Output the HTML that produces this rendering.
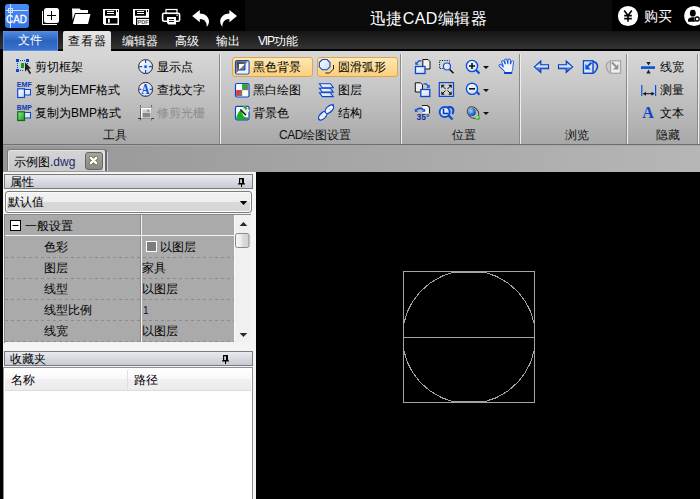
<!DOCTYPE html>
<html><head><meta charset="utf-8">
<style>
*{box-sizing:border-box;margin:0;padding:0}
html,body{width:700px;height:499px;overflow:hidden;background:#000;font-family:"Liberation Sans",sans-serif;}
.a{position:absolute}
.t{position:absolute;white-space:nowrap;line-height:1;}
svg{position:absolute;overflow:visible}
</style></head><body>
<!-- title bar -->
<div class="a" style="left:0;top:0;width:700px;height:31px;background:#000"></div>
<div class="a" style="left:245px;top:0;width:367px;height:31px;background:#0a0a0a"></div>
<!-- CAD logo -->
<div class="a" style="left:5px;top:4px;width:24px;height:24px;background:linear-gradient(#4a8cf6,#3474e6);border-radius:3px"></div>
<svg style="left:0;top:0" width="40" height="31">
<line x1="10.5" y1="4" x2="10.5" y2="28" stroke="#cfe0ff" stroke-width="1"/>
<line x1="6" y1="10.5" x2="28" y2="10.5" stroke="#cfe0ff" stroke-width="1"/>
<rect x="8.5" y="8.5" width="4" height="4" fill="none" stroke="#cfe0ff" stroke-width="1"/>
</svg>
<div class="t" style="left:6px;top:14px;font-size:11px;color:#fff;transform:scaleX(0.9);transform-origin:0 0;-webkit-text-stroke:0.3px #fff">CAD</div>
<svg style="left:0;top:0" width="245" height="31">
<!-- plus -->
<path d="M42.5 11 V24.5 H57" fill="none" stroke="#fff" stroke-width="1"/>
<rect x="44" y="8" width="15" height="15" rx="2.5" fill="#fff"/>
<path d="M47 15.5 H56 M51.5 11 V20" stroke="#000" stroke-width="1"/>
<!-- folder -->
<path d="M72 8.5 H79.5 L81 10 H88 V13 H75 L72.5 20 Z" fill="#fff"/>
<path d="M75.5 14 H90.5 L88 24 H72.8 Z" fill="#fff"/>
<!-- save -->
<path d="M103 9 H119 V25 H104.5 L103 23.5 Z" fill="#fff"/>
<rect x="105" y="10.2" width="11" height="5.6" fill="#000"/>
<path d="M107 11.5 H114 M107 13.5 H114" stroke="#fff" stroke-width="1"/>
<rect x="117" y="10" width="1" height="2" fill="#000"/>
<rect x="106" y="18" width="11.5" height="5.6" fill="#000"/>
<rect x="108" y="18.8" width="1.8" height="4" fill="#fff"/>
<!-- pdf save -->
<path d="M133 9 H149 V25 H134.5 L133 23.5 Z" fill="#fff"/>
<rect x="135" y="10.2" width="11" height="5.6" fill="#000"/>
<path d="M137 11.5 H144 M137 13.5 H144" stroke="#fff" stroke-width="1"/>
<rect x="147" y="10" width="1" height="2" fill="#000"/>
<rect x="136" y="17.8" width="13" height="1.2" fill="#000"/>
<rect x="136" y="17.8" width="1.2" height="7.2" fill="#000"/>
<text x="137.6" y="24.2" font-size="5.6" font-family="Liberation Sans" font-weight="bold" fill="#555">PDF</text>
<!-- printer -->
<rect x="166" y="9.5" width="11" height="4" fill="none" stroke="#fff" stroke-width="1.2"/>
<rect x="162.6" y="13.3" width="17" height="8" rx="1.5" fill="none" stroke="#fff" stroke-width="1.6"/>
<rect x="176.5" y="14.6" width="1.3" height="1.3" fill="#fff"/>
<path d="M167 17 H176 V24.6 H168.5 L167 23 Z" fill="#fff"/>
<path d="M169 19.5 H174 M169 21.5 H174" stroke="#000" stroke-width="0.9"/>
<!-- undo -->
<path d="M192.2 16 L199.8 10 V13.5 C205 13.5 209 17 209 21.5 C209 23.5 208 25.5 206.8 26.8 C206.8 22 204.5 19 199.8 19 V22.2 Z" fill="#fff"/>
<!-- redo -->
<path d="M237 16 L229.4 10 V13.5 C224.2 13.5 220.2 17 220.2 21.5 C220.2 23.5 221.2 25.5 222.4 26.8 C222.4 22 224.7 19 229.4 19 V22.2 Z" fill="#fff"/>
</svg>
<svg style="left:0;top:0" width="700" height="31">
<circle cx="628" cy="16" r="10.1" fill="#fff"/>
<path d="M624.2 10.6 L628 15.5 L631.8 10.6 M628 15.5 V21.8 M624.2 15.6 H631.8 M624.2 18.6 H631.8" fill="none" stroke="#000" stroke-width="1.6"/>
<circle cx="694.2" cy="16" r="10.1" fill="#fff"/>
<ellipse cx="692.8" cy="13.2" rx="2.9" ry="3.4" fill="#000"/>
<path d="M688 21.8 V20 C688 18 690 17.2 692.8 17.2 C695 17.2 696 17.6 696.5 18 V21.8 Z" fill="#000"/>
<circle cx="697.2" cy="19" r="2.9" fill="#fff"/>
<circle cx="697.2" cy="19" r="2" fill="none" stroke="#000" stroke-width="1.3"/>
</svg>
<div class="t" style="left:644px;top:9px;font-size:14px;color:#fff">购买</div>
<div class="t" style="left:370px;top:11px;font-size:16px;color:#fff;letter-spacing:0.4px">迅捷CAD编辑器</div>

<!-- menu bar -->
<div class="a" style="left:0;top:31px;width:700px;height:19px;background:linear-gradient(#141414,#363636)"></div>
<div class="a" style="left:0;top:49px;width:700px;height:2px;background:#000"></div>
<div class="a" style="left:3px;top:31px;width:55px;height:20px;background:linear-gradient(#4a88de,#2d62c0 50%,#3a72d0);border:1px solid #5a8ee0"></div>
<div class="t" style="left:18px;top:34px;font-size:12px;color:#fff">文件</div>
<div class="a" style="left:63px;top:31px;width:48px;height:20px;background:linear-gradient(#e6e6e6,#d4d4d4);border-radius:2px 2px 0 0"></div>
<div class="t" style="left:68px;top:35px;font-size:12px;color:#000;letter-spacing:0.8px">查看器</div>
<div class="t" style="left:122px;top:35px;font-size:12px;color:#fff">编辑器</div>
<div class="t" style="left:175px;top:35px;font-size:12px;color:#fff">高级</div>
<div class="t" style="left:216px;top:35px;font-size:12px;color:#fff">输出</div>
<div class="t" style="left:258px;top:35px;font-size:12px;color:#fff"><span style="letter-spacing:-1.2px">VIP</span>功能</div>

<!-- ribbon -->
<div class="a" style="left:3px;top:51px;width:697px;height:93px;background:linear-gradient(#d8d8d8,#c4c4c4 45%,#a8a8a8)"></div>
<!-- dividers -->
<div class="a" style="left:219px;top:54px;width:1px;height:90px;background:#8a8a8a"></div>
<div class="a" style="left:220px;top:54px;width:1px;height:90px;background:#eeeeee"></div>
<div class="a" style="left:400px;top:54px;width:1px;height:90px;background:#8a8a8a"></div>
<div class="a" style="left:401px;top:54px;width:1px;height:90px;background:#eeeeee"></div>
<div class="a" style="left:519px;top:54px;width:1px;height:90px;background:#8a8a8a"></div>
<div class="a" style="left:520px;top:54px;width:1px;height:90px;background:#eeeeee"></div>
<div class="a" style="left:626px;top:54px;width:1px;height:90px;background:#8a8a8a"></div>
<div class="a" style="left:627px;top:54px;width:1px;height:90px;background:#eeeeee"></div>
<div class="a" style="left:697px;top:54px;width:1px;height:90px;background:#8a8a8a"></div>
<div class="a" style="left:698px;top:54px;width:1px;height:90px;background:#eeeeee"></div>

<div class="t" style="left:35px;top:61px;font-size:12px;color:#000">剪切框架</div>
<div class="t" style="left:35px;top:84px;font-size:12px;color:#000">复制为EMF格式</div>
<div class="t" style="left:35px;top:107px;font-size:12px;color:#000">复制为BMP格式</div>
<div class="t" style="left:157px;top:61px;font-size:12px;color:#000">显示点</div>
<div class="t" style="left:157px;top:84px;font-size:12px;color:#000">查找文字</div>
<div class="t" style="left:157px;top:107px;font-size:12px;color:#8c8c8c">修剪光栅</div>
<div class="t" style="left:103px;top:129px;font-size:12px;color:#111">工具</div>

<div class="a" style="left:232px;top:57px;width:81px;height:20px;border:1px solid #dea64c;border-radius:3px;background:linear-gradient(#fee8b4,#fbd07c)"></div>
<div class="a" style="left:317px;top:57px;width:81px;height:20px;border:1px solid #dea64c;border-radius:3px;background:linear-gradient(#fee8b4,#fbd07c)"></div>
<div class="t" style="left:253px;top:61px;font-size:12px;color:#000">黑色背景</div>
<div class="t" style="left:338px;top:61px;font-size:12px;color:#000">圆滑弧形</div>
<div class="t" style="left:253px;top:84px;font-size:12px;color:#000">黑白绘图</div>
<div class="t" style="left:253px;top:107px;font-size:12px;color:#000">背景色</div>
<div class="t" style="left:338px;top:84px;font-size:12px;color:#000">图层</div>
<div class="t" style="left:338px;top:107px;font-size:12px;color:#000">结构</div>
<div class="t" style="left:279px;top:129px;font-size:12px;color:#111"><span style="letter-spacing:-0.4px">CAD</span>绘图设置</div>

<div class="t" style="left:452px;top:129px;font-size:12px;color:#111">位置</div>
<div class="t" style="left:565px;top:129px;font-size:12px;color:#111">浏览</div>
<div class="t" style="left:660px;top:61px;font-size:12px;color:#000">线宽</div>
<div class="t" style="left:660px;top:84px;font-size:12px;color:#000">测量</div>
<div class="t" style="left:660px;top:107px;font-size:12px;color:#000">文本</div>
<div class="t" style="left:656px;top:129px;font-size:12px;color:#111">隐藏</div>

<!-- ribbon icons -->
<svg style="left:0;top:0" width="700" height="145">
<defs>
<linearGradient id="lb" x1="0" y1="0" x2="1" y2="1"><stop offset="0" stop-color="#ffffff"/><stop offset="1" stop-color="#c8d8f8"/></linearGradient>
<linearGradient id="gr" x1="0" y1="0" x2="1" y2="1"><stop offset="0" stop-color="#9ee89e"/><stop offset="1" stop-color="#1a9a1a"/></linearGradient>
<linearGradient id="dk" x1="0" y1="0" x2="1" y2="1"><stop offset="0" stop-color="#3a3a3a"/><stop offset="1" stop-color="#9a9a9a"/></linearGradient>
<radialGradient id="sph" cx="0.35" cy="0.35" r="0.7"><stop offset="0" stop-color="#a8d0ff"/><stop offset="1" stop-color="#0040b0"/></radialGradient>
<radialGradient id="gsph" cx="0.35" cy="0.35" r="0.7"><stop offset="0" stop-color="#b0ffb0"/><stop offset="1" stop-color="#10a010"/></radialGradient>
<linearGradient id="arr" x1="0" y1="0" x2="0" y2="1"><stop offset="0" stop-color="#3a7ae8"/><stop offset="0.45" stop-color="#e8f0ff"/><stop offset="0.6" stop-color="#5a90f0"/><stop offset="1" stop-color="#1a50c8"/></linearGradient>
</defs>
<!-- 剪切框架 -->
<g fill="#0a46d0">
<rect x="16" y="59" width="3" height="3"/><rect x="26" y="59" width="3" height="3"/><rect x="16" y="69" width="3" height="3"/>
<rect x="20" y="60" width="1" height="1"/><rect x="22" y="60" width="1" height="1"/><rect x="24" y="60" width="1" height="1"/>
<rect x="17" y="63" width="1" height="1"/><rect x="17" y="65" width="1" height="1"/><rect x="17" y="67" width="1" height="1"/>
<rect x="20" y="70" width="1" height="1"/><rect x="22" y="70" width="1" height="1"/><rect x="27" y="63" width="1" height="1"/>
</g>
<rect x="21" y="63" width="3" height="5" fill="#10a010"/>
<path d="M25 62.3 L31 68.5 L28.5 68.8 L31.2 73.2 L29.6 74 L27 69.5 L25 71.8 Z" fill="#202020"/>
<!-- EMF -->
<text x="16.8" y="87" font-size="7" font-weight="bold" font-family="Liberation Sans" fill="#0a3ab8" textLength="15" lengthAdjust="spacingAndGlyphs">EMF</text>
<rect x="22.5" y="89.5" width="8" height="5.5" fill="url(#lb)" stroke="#0a46d0" stroke-width="1"/>
<rect x="17.7" y="88.8" width="6.8" height="8.7" fill="url(#lb)" stroke="#0a46d0" stroke-width="1.2"/>
<!-- BMP -->
<text x="16.8" y="110" font-size="7" font-weight="bold" font-family="Liberation Sans" fill="#0a3ab8" textLength="15" lengthAdjust="spacingAndGlyphs">BMP</text>
<rect x="22.5" y="112.5" width="8" height="5.5" fill="url(#lb)" stroke="#0a46d0" stroke-width="1"/>
<rect x="17.7" y="111.8" width="6.8" height="8.7" fill="url(#gr)" stroke="#106a10" stroke-width="1.2"/>
<!-- 显示点 -->
<circle cx="145.6" cy="66.6" r="7" fill="url(#lb)" stroke="#2a2a2a" stroke-width="1"/>
<path d="M145.6 60 V63 M145.6 70 V73 M139.2 66.6 H142.2 M149 66.6 H152" stroke="#0a50d8" stroke-width="1.2"/>
<rect x="144.3" y="65.4" width="2.5" height="2.5" fill="#0a50d8"/>
<!-- 查找文字 -->
<circle cx="145.6" cy="89.4" r="7" fill="url(#lb)" stroke="#2a2a2a" stroke-width="1"/>
<path d="M139.2 89.4 H141.5 M149.7 89.4 H152 M145.6 95.5 V96" stroke="#0a50d8" stroke-width="1.2"/>
<text x="0" y="0" font-size="14.5" font-weight="bold" font-family="Liberation Serif" fill="#0a50d8" transform="translate(141.3 93.6) scale(0.78 1)">A</text>
<!-- 修剪光栅 -->
<path d="M140.5 105 V120.5 M151.5 105 V120.5" stroke="#666" stroke-width="1"/>
<path d="M138 107.5 H154" stroke="#aaa" stroke-width="1"/>
<path d="M138 118.5 H154" stroke="#333" stroke-width="1"/>
<rect x="141.5" y="108.5" width="9.5" height="9.5" fill="#f4f4f4" stroke="#fff"/>
<rect x="142.5" y="113" width="8" height="4.5" fill="#888"/>
<rect x="142.5" y="109.5" width="8" height="3.5" fill="#ccc"/>
<circle cx="148.2" cy="110.8" r="1.3" fill="#999"/>
<!-- 黑色背景 -->
<rect x="235.5" y="60.5" width="13.5" height="13.5" rx="1.5" fill="#fff" stroke="#0a46c8" stroke-width="1.2"/>
<path d="M236.3 61.3 H248.2 L236.3 73.2 Z" fill="url(#dk)"/>
<path d="M248.2 61.3 V73.2 H236.3 Z" fill="#eef2ff"/>
<rect x="239" y="64" width="6" height="6" fill="#fff"/>
<path d="M245 64 V70 H239 Z" fill="#777"/>
<path d="M239 70 H245 V64" fill="none" stroke="#0a46c8" stroke-width="1"/>
<!-- 黑白绘图 -->
<rect x="235.5" y="83.5" width="13.5" height="13.5" rx="1.5" fill="#fff" stroke="#0a46c8" stroke-width="1.2"/>
<path d="M242.2 84.3 H248.2 V90.2 H242.2 Z" fill="#777"/>
<path d="M242.2 84.3 H248.2 L242.2 90.2 Z" fill="#18b818"/>
<path d="M236.3 90.2 H242.2 V96.2 H236.3 Z" fill="#777"/>
<path d="M236.3 90.2 H242.2 L236.3 96.2 Z" fill="#f03030"/>
<!-- 背景色 -->
<rect x="235.5" y="106.3" width="13.5" height="13.5" rx="1.5" fill="#fff" stroke="#0a46c8" stroke-width="1.2"/>
<path d="M236.3 119.2 V117 C237.5 115 238.5 111 240.5 110.5 C242 111.5 242.5 115 244 116.5 C245.5 117.5 247 117.5 248.2 117.3 V119.2 Z" fill="#18b018"/>
<path d="M240.5 109.5 L244.5 105.5 L249.8 110.8 L245.8 114.8 Z" fill="#e8e8e8"/>
<path d="M243 107 L244.5 105.5 L247.5 108.5 L246 110 Z" fill="#18b018"/>
<path d="M240.3 109.5 L246 115.2" stroke="#111" stroke-width="1.6"/>
<!-- 圆滑弧形 -->
<path d="M322.3 59.5 H327 L330 62.5 V66.8 L327 69.8 H322.3 L319.3 66.8 V62.5 Z" fill="url(#lb)" stroke="#0a46d0" stroke-width="1.1"/>
<path d="M333.5 65 V69 L329.5 73 H325.3" fill="none" stroke="#222" stroke-width="1"/>
<!-- 图层 -->
<path d="M319.5 92.8 H330.5 L333.3 96.6 H322.3 Z" fill="url(#lb)" stroke="#0a46d0" stroke-width="1.1"/>
<path d="M319.5 88.3 H330.5 L333.3 92.1 H322.3 Z" fill="url(#lb)" stroke="#0a46d0" stroke-width="1.1"/>
<path d="M319.5 83.8 H330.5 L333.3 87.8 H322.3 Z" fill="url(#lb)" stroke="#0a46d0" stroke-width="1.1"/>
<!-- 结构 -->
<ellipse cx="322.8" cy="115.8" rx="5.2" ry="2.9" transform="rotate(-45 322.8 115.8)" fill="#f4f4ff" stroke="#0a46d0" stroke-width="1.3"/>
<ellipse cx="329.4" cy="109.2" rx="5.2" ry="2.9" transform="rotate(-45 329.4 109.2)" fill="#f4f4ff" stroke="#0a46d0" stroke-width="1.3"/>
<path d="M321 114 L324.5 117.5 M327.6 107.4 L331.2 111" stroke="#c8b890" stroke-width="1" stroke-dasharray="1 1"/>
<path d="M332.6 105 L333.5 104.2 M318.6 119.9 L319.8 119.2" stroke="#0a46d0" stroke-width="1.3"/>
<!-- 位置 col1 -->
<path d="M422.8 59.5 H428 L430 61.5 V69 H422.8 Z" fill="#f0f0f0" stroke="#111" stroke-width="1"/>
<rect x="415.5" y="66.5" width="9.5" height="7" fill="url(#lb)" stroke="#0a46d0" stroke-width="1.3"/>
<path d="M421.5 60.8 H419 L416.5 63.3" fill="none" stroke="#0a50d8" stroke-width="1.3"/><path d="M415.3 61.5 V64.8 H418.6 Z" fill="#0a50d8"/>
<path d="M415.3 82.8 H420.5 L422.5 84.8 V92 H415.3 Z" fill="#f0f0f0" stroke="#111" stroke-width="1"/>
<rect x="420.8" y="89.5" width="9" height="7" fill="url(#lb)" stroke="#0a46d0" stroke-width="1.3"/>
<path d="M423.5 83.8 H426 L428.5 86.3" fill="none" stroke="#0a50d8" stroke-width="1.3"/><path d="M429.7 84.5 V87.8 H426.4 Z" fill="#0a50d8"/>
<path d="M422.5 105.5 H427.5 L429.5 107.5 V113.5 H422.5 Z" fill="#f4f4f4"/>
<path d="M422.5 106 V105.5 H427.5 L429.5 107.5 V113.5" fill="none" stroke="#222" stroke-width="1.1"/>
<path d="M416.5 109.8 C418 108 422 108 423.5 109.8" fill="none" stroke="#0a50d8" stroke-width="1.8"/>
<path d="M414.8 108.5 V111.8 H418.2 Z M425.2 108.5 V111.8 H421.8 Z" fill="#0a50d8"/>
<text x="416.5" y="120.2" font-size="8.6" font-weight="bold" font-family="Liberation Sans" fill="#0a2aa8" textLength="12.8" lengthAdjust="spacingAndGlyphs">35°</text>
<!-- 位置 col2 -->
<rect x="439.5" y="60.5" width="10" height="8" fill="none" stroke="#222" stroke-width="1" stroke-dasharray="1.2 1.2"/>
<path d="M449.3 69 L453.5 73.2" stroke="#111" stroke-width="1.6"/>
<circle cx="447" cy="66.5" r="3.5" fill="url(#lb)" stroke="#0a50d8" stroke-width="1.2"/>
<rect x="439.3" y="82.6" width="14.2" height="13.8" fill="#d0d0d0" stroke="#0a46d0" stroke-width="1.2"/>
<path d="M442 85.5 L445.5 89 M451 85.5 L447.5 89 M442 94 L445.5 90.5 M451 94 L447.5 90.5" stroke="#111" stroke-width="1"/>
<path d="M441.3 84.8 H444.8 L441.3 88.3 Z M451.7 84.8 H448.2 L451.7 88.3 Z M441.3 94.7 H444.8 L441.3 91.2 Z M451.7 94.7 H448.2 L451.7 91.2 Z" fill="#111"/>
<path d="M448.5 115.5 L452.5 119.5" stroke="#0a50d8" stroke-width="2.4"/>
<path d="M446.5 107.8 C451.5 105.8 455 108.5 452.5 114" fill="none" stroke="#0a46d0" stroke-width="2"/>
<circle cx="444.7" cy="112" r="5" fill="url(#lb)" stroke="#0a50d8" stroke-width="2"/>
<path d="M443.5 108.5 V113.5 H448.5" fill="none" stroke="#0a3ab8" stroke-width="1.6"/>
<!-- 位置 col3 -->
<path d="M476 70 L479.5 73.5" stroke="#0a50d8" stroke-width="2.2"/>
<circle cx="472" cy="66" r="5.6" fill="url(#lb)" stroke="#0a50d8" stroke-width="1.4"/>
<path d="M469 66 H475 M472 63 V69" stroke="#111" stroke-width="1.6"/>
<path d="M483 66 H489 L486 69 Z" fill="#111"/>
<path d="M476 91 L479.5 94.8" stroke="#0a50d8" stroke-width="2.2"/>
<circle cx="472" cy="88.8" r="5.6" fill="url(#lb)" stroke="#0a50d8" stroke-width="1.4"/>
<path d="M469 88.8 H475" stroke="#111" stroke-width="1.6"/>
<path d="M483 89 H489 L486 92 Z" fill="#111"/>
<ellipse cx="473" cy="112.6" rx="6.5" ry="5" transform="rotate(45 473 112.6)" fill="none" stroke="#444" stroke-width="1"/>
<circle cx="471.8" cy="112" r="4" fill="url(#sph)"/>
<circle cx="477.6" cy="117.8" r="2.3" fill="url(#gsph)"/>
<path d="M483 112 H489 L486 115 Z" fill="#111"/>
<!-- hand -->
<g stroke-linecap="round">
<path d="M500.2 65.5 L504.5 69.5 M502.8 61.8 L504.5 65.5 M505.8 60.2 L506.8 64.5 M509.2 60.2 L509.2 64.5 M512.4 62 L511.8 65" stroke="#1a56d8" stroke-width="3.2"/>
<path d="M503.5 64 H512.8 V68 C512.8 70 512 71 511.8 71.5 V73.5 H504.5 V71.5 L503.2 69.5 Z" fill="#f4f8ff" stroke="#1a56d8" stroke-width="1" stroke-linejoin="round"/>
<path d="M500.2 65.5 L504.5 69.5 M502.8 61.8 L504.5 65.5 M505.8 60.2 L506.8 64.5 M509.2 60.2 L509.2 64.5 M512.4 62 L511.8 65" stroke="#f8faff" stroke-width="1.4"/>
<path d="M504.2 64.6 H512.2 V68 C512.2 69.5 511.5 70.5 511.2 71 V72 H505 V71 L503.8 69.3 Z" fill="#eef3ff"/>
<rect x="504.5" y="72" width="7.3" height="2" fill="#0a40c0"/>
</g>
<!-- 浏览 -->
<path d="M534.3 66.8 L540.8 61 V64.8 H548.5 V68.7 H540.8 V72.6 Z" fill="url(#arr)" stroke="#0a3ab0" stroke-width="1.1"/>
<path d="M572.7 66.8 L566.2 61 V64.8 H558.5 V68.7 H566.2 V72.6 Z" fill="url(#arr)" stroke="#0a3ab0" stroke-width="1.1"/>
<path d="M590 61.5 C595 61 598 63.5 597.5 67 C597.2 69.5 595.5 71.5 594 73" fill="none" stroke="#0a46c8" stroke-width="1.6"/>
<rect x="583.5" y="60.8" width="9.5" height="12.5" fill="url(#lb)" stroke="#0a46c8" stroke-width="1.4"/>
<path d="M584.5 61.8 H592 V67 H584.5 Z" fill="#cfe0ff"/>
<path d="M591.5 62.5 L587.5 66.5" stroke="#0a50d8" stroke-width="2"/>
<path d="M585.3 64 V69.5 H590.8 Z" fill="#0a50d8"/>
<path d="M612.5 61.5 C608 61 606 63.5 606.3 67 C606.5 69.5 608 71.5 609.5 73" fill="none" stroke="#a8a8a8" stroke-width="1.6"/>
<rect x="610.5" y="60.8" width="10" height="12.5" fill="#f0f0f0" stroke="#a8a8a8" stroke-width="1.4"/>
<path d="M612 62.5 L616 66.5" stroke="#909090" stroke-width="2"/>
<path d="M618.3 64 V69.5 H612.8 Z" fill="#909090"/>
<!-- 隐藏 -->
<rect x="641" y="66.3" width="14" height="2.6" fill="#0a50d8"/>
<path d="M646.3 62 H650.7 L648.5 65.6 Z M646.3 73.4 H650.7 L648.5 69.6 Z" fill="#222"/>
<path d="M641.8 85 V96 M655.6 85 V96" stroke="#0a50d8" stroke-width="1.2"/>
<path d="M643.5 93.7 H654" stroke="#111" stroke-width="1"/>
<path d="M643 93.7 L646 91.7 V95.7 Z M654.5 93.7 L651.5 91.7 V95.7 Z" fill="#111"/>
<text x="0" y="0" font-size="16.5" font-weight="bold" font-family="Liberation Serif" fill="#0a46c8" transform="translate(642.3 118.4) scale(0.97 1)">A</text>
</svg>
<!-- tab strip -->
<div class="a" style="left:3px;top:144px;width:697px;height:1px;background:#6e6e6e"></div>
<div class="a" style="left:3px;top:145px;width:697px;height:27px;background:linear-gradient(90deg,#969696,#b6b6b6)"></div>
<div class="a" style="left:3px;top:145px;width:697px;height:1px;background:#a8a8a8"></div>
<div class="a" style="left:7px;top:149px;width:100px;height:22px;background:#7a7a7a;border-radius:3px 3px 0 0"></div>
<div class="a" style="left:8px;top:150px;width:97px;height:21px;background:#e4e4e4;border-radius:2px 2px 0 0"></div>
<div class="a" style="left:9px;top:151px;width:94px;height:20px;background:linear-gradient(#d4d4d4,#c8c8c8)"></div>
<div class="a" style="left:105px;top:151px;width:2px;height:20px;background:#686868"></div>
<div class="a" style="left:107px;top:152px;width:1px;height:19px;background:#cfcfcf"></div>
<div class="t" style="left:14px;top:156px;font-size:12px;color:#000">示例图<span style="color:#1a2a6a">.dwg</span></div>
<div class="a" style="left:85px;top:152px;width:18px;height:18px;background:linear-gradient(#a4a4a4,#8a8a8a);border:1px solid #666;border-radius:3px"></div>
<svg style="left:0;top:0" width="120" height="175">
<path d="M90.8 157.8 L96.2 163.2 M96.2 157.8 L90.8 163.2" stroke="#7a6a2a" stroke-width="4" stroke-linecap="round"/>
<path d="M90.8 157.8 L96.2 163.2 M96.2 157.8 L90.8 163.2" stroke="#fff" stroke-width="2.4" stroke-linecap="round"/>
</svg>

<!-- canvas -->
<div class="a" style="left:256px;top:172px;width:444px;height:327px;background:#000"></div>

<!-- left panel -->
<div class="a" style="left:3px;top:172px;width:253px;height:327px;background:#f4f4f4"></div>


<div class="a" style="left:4px;top:174px;width:249px;height:15px;border:1px solid #7a7a7a;background:linear-gradient(#e8eaee,#c6cad2)"></div>
<div class="t" style="left:10px;top:176px;font-size:12px;color:#000">属性</div>
<svg style="left:0;top:0" width="260" height="215">
<rect x="239" y="178" width="5" height="6" fill="#000"/><rect x="240.3" y="179.3" width="1.5" height="3.8" fill="#fff"/><rect x="238" y="183.3" width="7" height="1.2" fill="#000"/><rect x="241" y="184" width="1.1" height="3" fill="#000"/>
<path d="M239.8 201 H247.3 L243.55 205 Z" fill="#000"/>
</svg>
<div class="a" style="left:5px;top:191px;width:247px;height:22px;border:1px solid #7c7c7c;border-radius:3px;background:linear-gradient(#f2f2f2 0,#eeeeee 50%,#d8d8d8 50%,#d6d6d6 100%);box-shadow:inset 0 0 0 1px #fafafa"></div>
<svg style="left:0;top:0" width="260" height="215">
<path d="M239.8 201 H247.3 L243.55 205 Z" fill="#000"/>
</svg>
<div class="t" style="left:8px;top:196px;font-size:12px;color:#000">默认值</div>
<!-- grid -->
<div class="a" style="left:4px;top:214px;width:247px;height:1px;background:#8a8a8a"></div>
<div class="a" style="left:4px;top:214px;width:1px;height:129px;background:#8a8a8a"></div>
<div class="a" style="left:5px;top:215px;width:229px;height:127px;background:#aaaaaa"></div>
<div class="a" style="left:234px;top:215px;width:17px;height:127px;background:#f0f0f0"></div>
<div class="a" style="left:234px;top:215px;width:1px;height:127px;background:#fafafa"></div>
<div class="a" style="left:140px;top:215px;width:1px;height:127px;background:#8a8a8a"></div>
<div class="a" style="left:141px;top:215px;width:1px;height:127px;background:#f4f4f4"></div>
<div class="a" style="left:5px;top:235px;width:229px;height:1px;background:#f4f4f4"></div>
<svg style="left:0;top:0" width="260" height="345">
<path d="M5 257.5 H234 M5 278.5 H234 M5 299.5 H234 M5 320.5 H234 M5 341.5 H234" stroke="#8c8c8c" stroke-width="1" stroke-dasharray="3 3"/>
<rect x="10.5" y="220.5" width="10" height="10" fill="#fff" stroke="#000" stroke-width="1"/>
<path d="M12.5 225.5 H18.5" stroke="#000" stroke-width="1"/>
<rect x="146" y="241" width="11" height="11" fill="#fff"/>
<rect x="147" y="242" width="9" height="9" fill="#7c7c7c"/>
<path d="M239.6 226 H247.3 L243.45 222 Z" fill="#2a2a2a"/>
<path d="M239.6 333 H247.3 L243.45 337 Z" fill="#2a2a2a"/>
<rect x="235.5" y="233.5" width="13.5" height="14" rx="2" fill="url(#thumb)" stroke="#8a8a8a" stroke-width="1"/>
<defs><linearGradient id="thumb" x1="0" y1="0" x2="1" y2="0"><stop offset="0" stop-color="#f6f6f6"/><stop offset="0.5" stop-color="#eaeaea"/><stop offset="0.5" stop-color="#dcdcdc"/><stop offset="1" stop-color="#d0d0d0"/></linearGradient></defs>
</svg>
<div class="t" style="left:25px;top:220px;font-size:12px;color:#000">一般设置</div>
<div class="t" style="left:44px;top:241px;font-size:12px;color:#000">色彩</div>
<div class="t" style="left:44px;top:262px;font-size:12px;color:#000">图层</div>
<div class="t" style="left:44px;top:283px;font-size:12px;color:#000">线型</div>
<div class="t" style="left:44px;top:304px;font-size:12px;color:#000">线型比例</div>
<div class="t" style="left:44px;top:325px;font-size:12px;color:#000">线宽</div>
<div class="t" style="left:160px;top:241px;font-size:12px;color:#000">以图层</div>
<div class="t" style="left:142px;top:262px;font-size:12px;color:#000">家具</div>
<div class="t" style="left:142px;top:283px;font-size:12px;color:#000">以图层</div>
<div class="t" style="left:143px;top:306px;font-size:10px;color:#0a0a40">1</div>
<div class="t" style="left:142px;top:325px;font-size:12px;color:#000">以图层</div>

<!-- favorites -->
<div class="a" style="left:4px;top:351px;width:249px;height:15px;border:1px solid #7a7a7a;background:linear-gradient(#e8eaee,#c6cad2)"></div>
<div class="t" style="left:10px;top:353px;font-size:12px;color:#000">收藏夹</div>
<svg style="left:0;top:0" width="260" height="370">
<rect x="223" y="355" width="5" height="6" fill="#000"/><rect x="224.3" y="356.3" width="1.5" height="3.8" fill="#fff"/><rect x="222" y="360.3" width="7" height="1.2" fill="#000"/><rect x="225" y="361" width="1.1" height="3" fill="#000"/>
</svg>
<div class="a" style="left:3px;top:367px;width:250px;height:132px;background:#fff;border-left:1px solid #8c9098;border-right:1px solid #8c9098;border-top:1px solid #8c9098"></div>
<div class="a" style="left:5px;top:368px;width:246px;height:23px;background:linear-gradient(#ffffff,#f8f8f8 50%,#f0f0f2 50%,#ececee);border-bottom:1px solid #dcdcdc"></div>
<div class="a" style="left:127px;top:370px;width:1px;height:20px;background:#e0e0e0"></div>
<div class="t" style="left:11px;top:374px;font-size:12px;color:#000">名称</div>
<div class="t" style="left:134px;top:374px;font-size:12px;color:#000">路径</div>

<!-- drawing -->
<svg style="left:0;top:0" width="700" height="499">
<rect x="403.5" y="271.5" width="131" height="131" fill="none" stroke="#a4a4a4" stroke-width="1" shape-rendering="crispEdges"/>
<polygon points="484.0,272.1 496.1,276.2 508.1,283.1 518.5,292.4 525.5,301.7 530.8,312.1 534.4,324.3 534.4,349.7 530.8,361.9 525.5,372.3 518.5,381.6 508.1,390.9 496.1,397.8 484.0,401.9 454.0,401.9 441.9,397.8 429.9,390.9 419.5,381.6 412.5,372.3 407.2,361.9 403.6,349.7 403.6,324.3 407.2,312.1 412.5,301.7 419.5,292.4 429.9,283.1 441.9,276.2 454.0,272.1" fill="none" stroke="#a4a4a4" stroke-width="1" shape-rendering="crispEdges"/>
<line x1="403.5" y1="337.5" x2="534.5" y2="337.5" stroke="#a4a4a4" shape-rendering="crispEdges"/>
</svg>
</body></html>
